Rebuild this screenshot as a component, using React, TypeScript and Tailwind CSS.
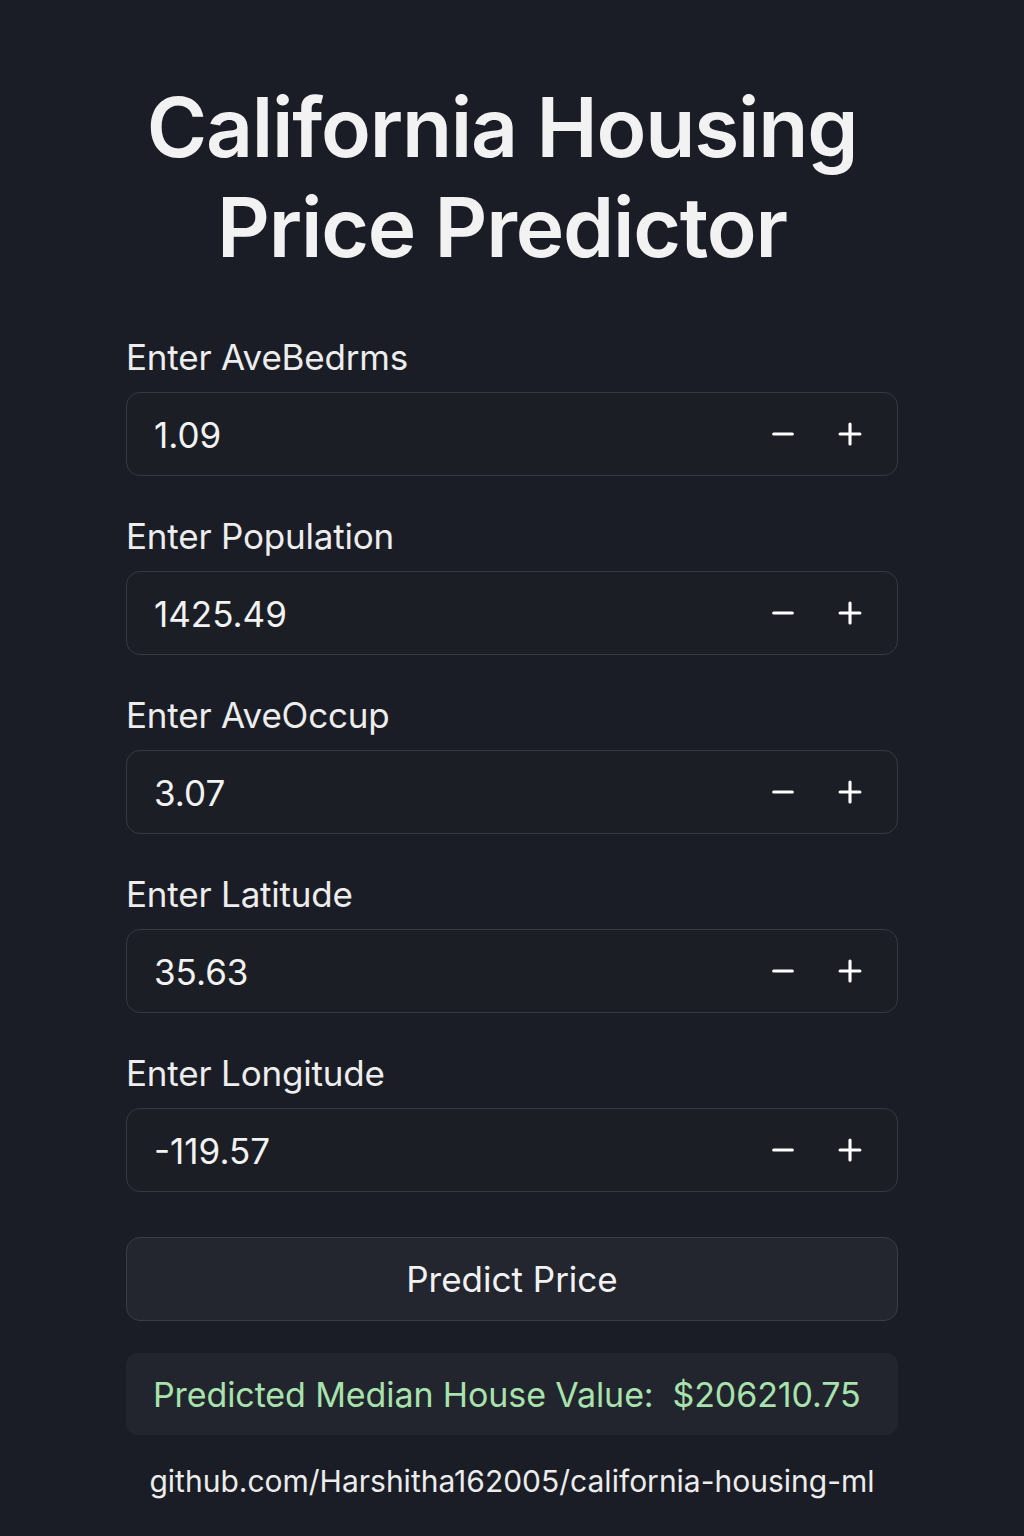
import { Minus, Plus } from 'lucide-react'

const FIELDS = [
  { label: 'Enter AveBedrms', value: '1.09' },
  { label: 'Enter Population', value: '1425.49' },
  { label: 'Enter AveOccup', value: '3.07' },
  { label: 'Enter Latitude', value: '35.63' },
  { label: 'Enter Longitude', value: '-119.57' },
]

function NumberField({ label, value }: { label: string; value: string }) {
  return (
    <div className="flex flex-col">
      <label className="h-[40px] leading-[40px] text-[35px] text-[#ededed] tracking-[-0.2px]">{label}</label>
      <div className="mt-[15px] h-[84px] flex items-center rounded-[14px] border border-[#363943] bg-[#1c1e26] pl-[27px] pr-[30px]">
        <span className="flex-1 text-[35px] text-[#f2f2f2] pt-[2px]">{value}</span>
        <div className="flex items-center gap-[34px]">
          <Minus className="w-[32px] h-[32px] text-white" strokeWidth={2.3} />
          <Plus className="w-[34px] h-[34px] text-white" strokeWidth={2.2} />
        </div>
      </div>
    </div>
  )
}

export default function App() {
  return (
    <div
      className="min-h-[1536px] w-full bg-[#1b1d26] text-white"
      style={{ fontFamily: 'Inter, "Noto Sans", sans-serif' }}
    >
      <div className="mx-auto w-[772px] pt-[78px]">
        {/* Title */}
        <h1 className="pr-[20px] text-center text-[82px] leading-[100px] font-semibold tracking-[-1.2px] text-[#f2f2f2]">
          California Housing
          <br />
          Price Predictor
        </h1>

        {/* Inputs */}
        <div className="mt-[59px] flex flex-col gap-[40px]">
          {FIELDS.map((f) => (
            <NumberField key={f.label} label={f.label} value={f.value} />
          ))}
        </div>

        <button className="mt-[45px] w-full h-[84px] rounded-[14px] border border-[#3a3d47] bg-[#23262f] text-[35px] text-[#f2f2f2]">
          Predict Price
        </button>

        <div className="mt-[32px] h-[82px] flex items-center rounded-[12px] bg-[#22252e] px-[27px]">
          <span className="text-[34px] text-[#a8e2ad] whitespace-pre tracking-[-0.1px]">Predicted Median House Value:  $206210.75</span>
        </div>

        <p className="mt-[26px] h-[40px] leading-[40px] text-center text-[30px] text-[#ececec]">
          github.com/Harshitha162005/california-housing-ml
        </p>
      </div>
    </div>
  )
}
